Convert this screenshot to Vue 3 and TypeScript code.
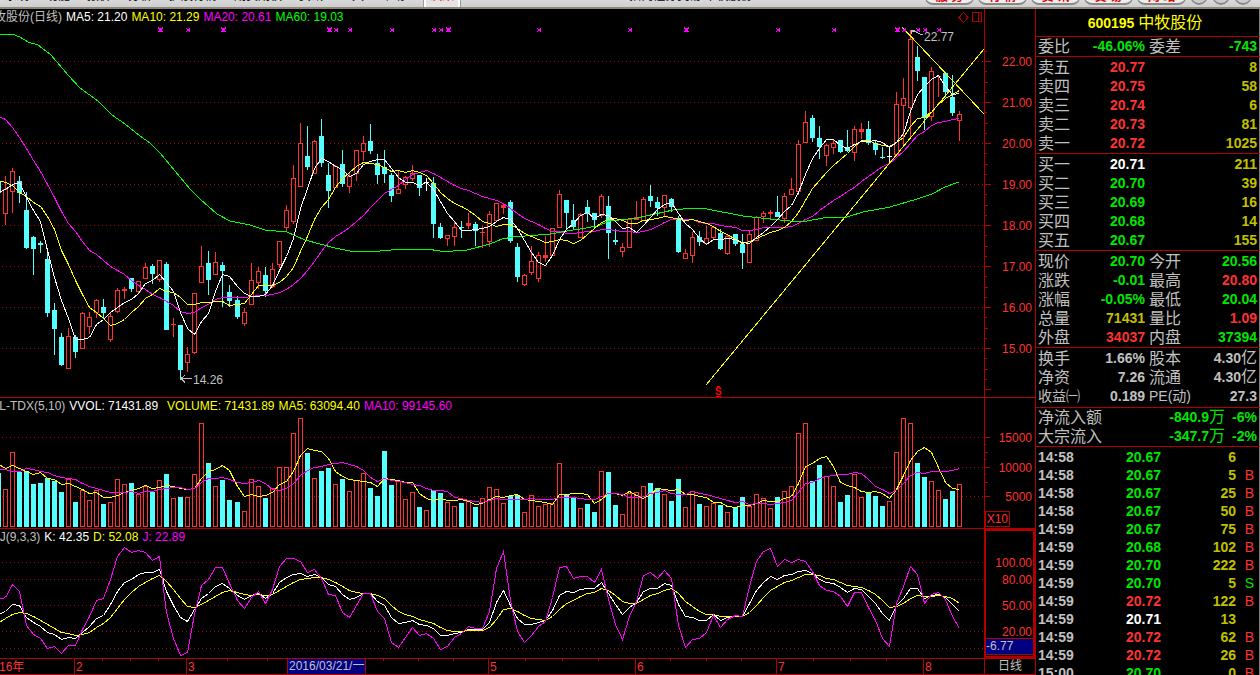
<script setup lang="ts">
type Candle = [kind: string, high: number, top: number, bottom: number, low: number, volume: number]
type Point = [number, number]

// Each session: direction (r up, c down, w unchanged), then high, body top, body bottom, low and volume top on the chart scale.
const source = `r 176 189 214 225 489|r 168 171 192 213 452|c 176 181 193 203 472|c 192 210 248 249 471|c 236 237 249 275 484
c 241 243 245 253 483|c 250 259 313 317 478|c 303 310 329 355 481|c 333 337 365 366 492|r 328 336 369 369 479
c 335 337 352 358 502|r 312 313 349 349 490|r 312 317 327 334 500|r 299 300 313 318 490|c 299 307 313 319 504
r 313 316 340 342 502|r 288 290 312 313 479|r 287 289 291 299 484|c 278 278 289 292 483|r 281 281 292 293 494
r 263 267 279 279 486|c 264 266 274 284 492|r 260 260 280 282 480|c 262 264 330 330 474|r 318 324 325 337 498
c 325 325 370 380 497|r 347 354 363 372 497|r 293 293 353 354 474|r 246 266 283 283 423|c 251 263 280 295 463
r 252 262 275 275 486|c 262 265 271 307 480|c 285 292 301 307 500|c 296 300 317 319 502|r 308 312 324 326 511
r 263 280 305 305 479|r 267 271 283 289 486|c 267 275 291 297 498|r 263 269 287 288 488|r 241 241 265 268 467
r 205 210 228 232 467|r 165 178 222 224 433|r 123 143 187 187 418|c 126 156 167 170 453|r 140 141 174 174 478
c 119 136 163 167 471|c 163 175 191 208 468|r 165 166 188 188 484|c 150 164 184 187 479|r 173 176 187 193 491
r 150 150 174 181 480|r 136 143 152 161 473|c 124 141 151 154 488|c 154 163 175 184 496|c 150 167 174 183 451
c 173 175 196 202 485|r 171 189 194 194 481|r 176 177 185 189 499|r 165 173 179 181 492|c 175 175 188 196 507
w 178 182 183 191 510|c 177 183 224 238 490|c 223 227 238 239 493|r 235 235 239 246 502|r 222 227 237 246 506
c 221 227 228 238 503|r 213 223 226 229 501|c 222 224 231 246 507|r 226 232 233 248 498|r 211 214 242 247 487
r 203 203 221 221 489|r 204 205 208 214 503|c 200 202 241 243 496|c 243 247 277 282 495|r 274 275 285 286 512
r 246 261 273 275 495|r 252 255 279 282 506|r 236 255 258 262 504|r 228 228 256 256 503|r 190 194 228 228 463
c 200 200 213 230 495|c 204 220 227 230 498|r 213 214 238 238 508|c 200 207 214 222 504|c 213 213 220 228 512
r 194 196 216 218 471|c 196 206 233 259 472|c 229 240 242 245 505|r 243 247 252 257 514|r 219 219 248 248 493
r 201 217 220 220 492|r 197 199 221 221 486|c 185 196 201 207 483|c 197 202 208 216 488|r 195 195 208 216 494
c 198 199 207 212 501|c 216 218 252 253 479|r 249 253 259 259 507|r 232 237 256 263 491|c 231 237 242 246 504
r 226 238 244 244 506|r 227 227 238 239 503|c 229 233 249 250 505|r 235 236 254 255 512|c 234 234 244 246 507
c 234 244 253 269 497|r 230 234 263 263 506|r 216 217 241 241 494|r 211 213 217 223 498|r 210 212 214 219 508
c 196 212 217 217 497|r 193 196 219 223 491|r 178 189 195 195 486|r 140 144 192 195 433|r 111 122 143 143 423
c 115 118 138 142 481|c 126 138 147 159 465|r 144 145 156 166 476|r 140 143 148 154 486|c 140 140 152 153 502
c 130 147 151 152 495|r 126 129 153 161 474|r 123 129 132 139 497|c 121 129 143 145 492|c 141 143 150 155 496
c 147 157 158 159 506|w 146 156 157 163 501|r 92 104 155 155 452|r 78 98 106 145 418|r 30 39 108 137 423
c 46 57 71 81 463|c 77 77 118 130 477|r 67 71 117 121 481|r 75 76 77 97 490|c 73 73 92 97 499
c 75 97 113 116 491|r 111 114 121 141 484`

const candles: Candle[] = source.split(/[|\n]/).map((row) => {
  const [kind, ...values] = row.trim().split(' ')
  return [kind, ...values.map(Number)] as Candle
})

const xAt = (i: number): number => 5 + 7 * i + (i > 32 ? 1 : 0) + (i > 103 ? 1 : 0)
const closes = candles.map((c) => (c[0] === 'c' ? c[3] : c[2]))
const volumes = candles.map((c) => c[5])

const toLine = (points: Point[]): string => points.map(([x, y]) => `${x},${y}`).join(' ')

// Values before a full window is available come from the lead-in list.
function average(values: number[], span: number, lead: number[]): string {
  const points: Point[] = [[0, lead[0]]]
  values.forEach((_, i) => {
    const y = i < span - 1 ? lead[i + 1] : values.slice(i - span + 1, i + 1).reduce((a, b) => a + b, 0) / span
    points.push([xAt(i) + 0.5, Math.round(y) + 0.5])
  })
  return toLine(points)
}

const priceLines = [
  { name: 'magenta', points: average(closes, 20, [117, 119, 127, 137, 148, 160, 171, 184, 197, 211, 223, 231, 241, 250, 254, 260, 266, 270, 274, 280]) },
  { name: 'green', points: '0,34 12,34 20,37 28,42 38,45 50,54 57,62 68,75 80,88 98,101 112,115 125,124 140,136 150,143 160,153 170,165 180,177 190,189 200,199 217,214 230,221 250,225 265,230 287,232 305,240 320,244 335,248 350,251 380,251 403,249 427,249 440,251 453,251 467,250 490,244 502,239 513,237 550,234 567,231 580,229 597,226 610,221 637,218 655,214 673,210 693,208 707,209 743,216 770,219 790,221 807,221 823,218 847,217 863,212 890,207 917,199 932,194 945,187 959,182' },
  { name: 'yellow', points: average(closes, 10, [181, 182, 185, 192, 196, 202, 206, 216, 229, 250]) },
  { name: 'white', points: average(closes, 5, [192, 189, 184, 182, 197]) },
]
const volumeLines = [
  { name: 'yellow', points: average(volumes, 5, [465, 468, 465, 468, 471]) },
  { name: 'magenta', points: average(volumes, 10, [469, 469, 471, 471, 468, 469, 471, 472, 475, 477]) },
]

function stochastic() {
  const leadK = [611, 604, 605, 617, 622, 626, 632, 634]
  const leadD = [618, 614, 612, 613, 616, 620, 624, 628]
  const k: Point[] = [[0, 614]]
  const d: Point[] = [[0, 622]]
  const j: Point[] = [[0, 599]]
  let ky = 0
  let dy = 0
  candles.forEach((_, i) => {
    if (i < 8) {
      ky = leadK[i]
      dy = leadD[i]
    } else {
      const span = candles.slice(i - 8, i + 1)
      const high = Math.min(...span.map((c) => c[1]))
      const low = Math.max(...span.map((c) => c[4]))
      const raw = 648.3 - (86.6 * (low - closes[i])) / (low - high)
      ky = (2 * ky + raw) / 3
      dy = (2 * dy + ky) / 3
    }
    const x = xAt(i) + 0.5
    k.push([x, Math.round(ky) + 0.5])
    d.push([x, Math.round(dy) + 0.5])
    j.push([x, Math.round(3 * ky - 2 * dy) + 0.5])
  })
  return [
    { name: 'white', points: toLine(k) },
    { name: 'yellow', points: toLine(d) },
    { name: 'magenta', points: toLine(j) },
  ]
}
const kdjLines = stochastic()

const box = (x: number, y: number, w: number, h: number): string => `M${x} ${y}h${w}v${h}h${-w}z`

const shapes = candles.map(([kind, high, top, bottom, low], i) => {
  const x = xAt(i)
  const hollow = kind === 'r' && bottom - top > 3
  let path = box(x - 2, top, 5, Math.max(1, bottom - top))
  if (hollow) path += box(x - 1, top + 1, 3, bottom - top - 2)
  if (top > high) path += box(x, high, 1, top - high)
  if (low > bottom) path += box(x, bottom, 1, low - bottom)
  return { kind, path }
})
const bars = candles.map(([kind, , , , , top], i) => {
  const x = xAt(i)
  return {
    kind: kind === 'c' ? 'c' : 'r',
    path: box(x - 2, top, 5, 527 - top) + (kind === 'c' ? '' : box(x - 1, top + 1, 3, 525 - top)),
  }
})

const priceGrid = [22, 21, 20, 19, 18, 17, 16, 15].map((p, i) => ({ label: p.toFixed(2), y: 61 + 41 * i }))
const volumeGrid = [{ label: '15000', y: 437 }, { label: '10000', y: 467 }, { label: '5000', y: 496 }]
const kdjGrid = [{ label: '100.00', y: 562 }, { label: '80.00', y: 579 }, { label: '50.00', y: 605 }, { label: '20.00', y: 631 }, { label: '', y: 648 }]
const priceTicks = Array.from({ length: 34 }, (_, i) => ({ y: Math.round(50.75 + 10.25 * i), w: (i + 3) % 4 === 0 ? 6 : (i + 1) % 4 === 0 ? 3 : 2 }))
const volumeTicks = [[437, 5], [444, 1], [452, 3], [459, 1], [467, 5], [474, 1], [482, 3], [489, 1], [496, 5]]

const markers: [number, boolean][] = [
  [160, true], [188, false], [223, true], [329, true], [336, false], [350, false], [392, false], [434, false], [441, false], [448, true],
  [539, false], [630, false], [686, true], [778, false], [834, false], [897, true], [904, false], [918, false], [925, false], [939, false],
]
const months: [string, number][] = [['2', 74], ['3', 186], ['5', 488], ['6', 635], ['7', 776], ['8', 923]]
const minorTicks = [102, 130, 158, 227, 267, 383, 418, 453, 525, 562, 598, 670, 706, 741, 813, 850, 886]

const menus = ['系统', '功能', '报价', '分析', '扩展行情', '期货期权', '资讯', '工具', '帮助']
const actions = ['服 务', '行 情', '资 讯', '交 易', '网 站']

const sells = [['卖五', '20.77', '8'], ['卖四', '20.75', '58'], ['卖三', '20.74', '6'], ['卖二', '20.73', '81'], ['卖一', '20.72', '1025']]
const buys = [['买一', '20.71', '211'], ['买二', '20.70', '39'], ['买三', '20.69', '16'], ['买四', '20.68', '14'], ['买五', '20.67', '155']]
const quotes = [
  ['现价', '20.70', 'up', '今开', '20.56', 'up'],
  ['涨跌', '-0.01', 'up', '最高', '20.80', 'hot'],
  ['涨幅', '-0.05%', 'up', '最低', '20.04', 'up'],
  ['总量', '71431', 'amount', '量比', '1.09', 'hot'],
  ['外盘', '34037', 'hot', '内盘', '37394', 'up'],
]
const facts = [['换手', '1.66%', '股本', '4.30', '亿'], ['净资', '7.26', '流通', '4.30', '亿'], ['收益㈠', '0.189', 'PE(动)', '27.3', '']]
const flows = [['净流入额', '-840.9', '-6%'], ['大宗流入', '-347.7', '-2%']]
const trades = [
  ['14:58', '20.67', '6', ''], ['14:58', '20.67', '5', 'B'], ['14:58', '20.67', '25', 'B'], ['14:58', '20.67', '50', 'B'],
  ['14:59', '20.67', '75', 'B'], ['14:59', '20.68', '102', 'B'], ['14:59', '20.70', '222', 'B'], ['14:59', '20.70', '5', 'S'],
  ['14:59', '20.72', '122', 'B'], ['14:59', '20.71', '13', ''], ['14:59', '20.72', '62', 'B'], ['14:59', '20.72', '26', 'B'],
  ['15:00', '20.70', '0', 'B'],
]
const tone = (price: string): string => (Number(price) > 20.71 ? 'hot' : Number(price) < 20.71 ? 'up' : 'even')
</script>

<template>
  <div class="app">
    <header class="topbar">
      <nav class="menu"><button v-for="m in menus" :key="m" type="button">{{ m }}</button></nav>
      <button class="tab" type="button">决策</button>
      <span class="caption">招商证券交易 中牧股份</span>
      <div class="actions">
        <button v-for="a in actions" :key="a" type="button" class="pill">{{ a }}</button>
        <button type="button" class="round" aria-label="最小化"><svg viewBox="0 0 18 18"><path d="M5 12h8" /></svg></button>
        <button type="button" class="round" aria-label="还原"><svg viewBox="0 0 18 18"><path d="M6 7h7v6H6z" /></svg></button>
        <button type="button" class="round" aria-label="关闭"><svg viewBox="0 0 18 18"><path d="M5 5l8 8M13 5l-8 8" /></svg></button>
      </div>
    </header>

    <div class="body">
      <main class="charts">
        <section class="plot">
          <p class="legend stock"><span class="grey">牧股份(日线)</span><span class="white">MA5: 21.20</span><span class="yellow">MA10: 21.29</span><span class="magenta">MA20: 20.61</span><span class="green">MA60: 19.03</span></p>
          <svg viewBox="0 9 984 388">
            <line v-for="g in priceGrid" :key="g.y" class="grid" x1="2" x2="984" :y1="g.y + 0.5" :y2="g.y + 0.5" />
            <path class="c" d="M0 181h1v12h-1z" />
            <path v-for="(s, i) in shapes" :key="i" :class="s.kind" :d="s.path" fill-rule="evenodd" />
            <polyline v-for="l in priceLines" :key="l.name" :class="l.name" :points="l.points" />
            <polyline class="yellow" points="902,27 984,114" />
            <polyline class="yellow" points="706,385 984,49" />
            <g v-for="[x, big] in markers" :key="x" class="marker">
              <path :d="`M${x - 2} 28h1v1h-1zM${x + 2} 28h-1v1h1zM${x - 1} 29h3v2h-3zM${x - 2} 31h1v1h-1zM${x + 2} 31h-1v1h1z`" />
              <path v-if="big" :d="`M${x - 2} 27h1v2h-1zM${x + 2} 27h1v2h-1zM${x - 1} 28h3v4h-3zM${x + 2} 31h1v1h-1z`" />
            </g>
            <path class="arrow" d="M911.5 34v-4h3M912 31l4 1l4 2l3 0M192 378.500h-10M185 375l-4 3.500l4 4" />
            <text class="note" x="924" y="41">22.77</text>
            <text class="note" x="193" y="384">14.26</text>
            <path class="tool" d="M963.5 12.500l4.500 5l-4.500 5l-4.500-5zM972.500 12.500h9v9h-9zM978.500 12.500v9" />
            <text class="event" x="715" y="395">S</text>
            <path class="event" d="M717 386h3v1h-3zM716 396h5v1h-5z" />
          </svg>
        </section>
        <section class="scale">
          <svg viewBox="985 9 50 388">
            <rect v-for="t in priceTicks" :key="t.y" class="tick" x="985" :y="t.y" :width="t.w" height="1" />
            <text v-for="g in priceGrid" :key="g.y" x="1032" :y="g.y + 5">{{ g.label }}</text>
          </svg>
        </section>

        <section class="plot">
          <p class="legend volume"><span class="grey">VOL-TDX(5,10)</span><span class="white">VVOL: 71431.89</span><span class="yellow lead">VOLUME: 71431.89</span><span class="yellow">MA5: 63094.40</span><span class="magenta">MA10: 99145.60</span></p>
          <svg viewBox="0 398 984 130">
            <line v-for="g in volumeGrid" :key="g.y" class="grid" x1="2" x2="984" :y1="g.y + 0.5" :y2="g.y + 0.5" />
            <path class="c" d="M0 473h1v54h-1z" />
            <path v-for="(b, i) in bars" :key="i" :class="b.kind" :d="b.path" fill-rule="evenodd" />
            <polyline v-for="l in volumeLines" :key="l.name" :class="l.name" :points="l.points" />
          </svg>
        </section>
        <section class="scale">
          <svg viewBox="985 398 50 130">
            <rect v-for="t in volumeTicks" :key="t[0]" class="tick" x="985" :y="t[0]" :width="t[1]" height="1" />
            <text v-for="g in volumeGrid" :key="g.y" x="1032" :y="g.y + 5">{{ g.label }}</text>
            <rect class="unit" x="985.500" y="511.500" width="24" height="15" />
            <text x="1008" y="523">X10</text>
          </svg>
        </section>

        <section class="plot">
          <p class="legend kdj"><span class="grey">KDJ(9,3,3)</span><span class="white">K: 42.35</span><span class="yellow">D: 52.08</span><span class="magenta">J: 22.89</span></p>
          <svg viewBox="0 529 984 129">
            <line v-for="g in kdjGrid" :key="g.y" class="grid" x1="2" x2="984" :y1="g.y + 0.5" :y2="g.y + 0.5" />
            <polyline v-for="l in kdjLines" :key="l.name" :class="l.name" :points="l.points" />
          </svg>
        </section>
        <section class="scale">
          <svg viewBox="985 529 50 129">
            <path class="frame" d="M985 530H1034V657H985z" />
            <rect class="cursor" x="986" y="638" width="47" height="17" />
            <path class="tick" d="M986 638h47v1h-47zM986 654h47v1h-47z" />
            <text v-for="g in kdjGrid" :key="g.y" x="1032" :y="g.y + 5">{{ g.label }}</text>
            <text class="note start" x="986" y="650">-6.77</text>
          </svg>
        </section>

        <section class="timeline">
          <svg viewBox="0 659 984 15">
            <text x="-1" y="671">16年</text>
            <g v-for="[name, x] in months" :key="name">
              <rect class="tick" :x="x" y="659" width="1" height="15" />
              <text :x="x + 2" y="671">{{ name }}</text>
            </g>
            <rect v-for="x in minorTicks" :key="x" class="tick" :x="x" y="659" width="1" height="2" />
            <rect class="cursor" x="287" y="659" width="79" height="15" />
            <path class="tick" d="M287 659h1v15h-1zM365 659h1v15h-1z" />
            <text class="note" x="289" y="670">2016/03/21/一</text>
          </svg>
        </section>
        <section class="period">日线</section>
      </main>

      <aside class="side">
        <h1>600195 <span>中牧股份</span></h1>
        <table class="pairs ratio"><tbody><tr><th>委比</th><td class="up">-46.06%</td><th>委差</th><td class="up">-743</td></tr></tbody></table>
        <table class="book"><tbody>
          <tr v-for="r in sells" :key="r[0]"><th>{{ r[0] }}</th><td class="hot">{{ r[1] }}</td><td class="amount">{{ r[2] }}</td></tr>
        </tbody></table>
        <table class="book"><tbody>
          <tr v-for="r in buys" :key="r[0]"><th>{{ r[0] }}</th><td :class="tone(r[1])">{{ r[1] }}</td><td class="amount">{{ r[2] }}</td></tr>
        </tbody></table>
        <table class="pairs"><tbody>
          <tr v-for="r in quotes" :key="r[0]"><th>{{ r[0] }}</th><td :class="r[2]">{{ r[1] }}</td><th>{{ r[3] }}</th><td :class="r[5]">{{ r[4] }}</td></tr>
        </tbody></table>
        <table class="pairs facts"><tbody>
          <tr v-for="r in facts" :key="r[0]"><th>{{ r[0] }}</th><td>{{ r[1] }}</td><th>{{ r[2] }}</th><td>{{ r[3] }}<span>{{ r[4] }}</span></td></tr>
        </tbody></table>
        <table class="flow"><tbody>
          <tr v-for="r in flows" :key="r[0]"><th>{{ r[0] }}</th><td class="up">{{ r[1] }}<span>万</span></td><td class="up">{{ r[2] }}</td></tr>
        </tbody></table>
        <table class="trades"><tbody>
          <tr v-for="(r, i) in trades" :key="i"><td>{{ r[0] }}</td><td :class="tone(r[1])">{{ r[1] }}</td><td class="amount">{{ r[2] }}</td><td :class="r[3] === 'S' ? 'up' : 'hot'">{{ r[3] }}</td></tr>
        </tbody></table>
      </aside>
    </div>
  </div>
</template>

<style>
body { margin: 0; background: #000; }
</style>

<style scoped>
.app {
  height: 100vh;
  display: flex;
  flex-direction: column;
  overflow: hidden;
  background: #000;
  color: #c0c0c0;
  font: 12px/16px "Liberation Sans", "Noto Sans CJK SC", sans-serif;
}
button { margin: 0; padding: 0; border: 0; background: none; font: inherit; color: inherit; white-space: nowrap; }
.topbar {
  flex: none;
  position: relative;
  display: flex;
  align-items: flex-end;
  height: 7px;
  padding-left: 5px;
  border-bottom: 2px solid #8c867c;
  background: linear-gradient(#dadada, #cecece);
  color: #000;
  overflow: hidden;
}
.menu { display: flex; gap: 17px; }
.menu button, .tab, .caption { line-height: 16px; padding-bottom: 3px; }
.tab { width: 36px; margin-left: 19px; border: solid #fff; border-width: 0 2px; outline: 1px solid #999; background: #e4e4e4; color: #f00; }
.caption { margin-left: 169px; }
.actions { display: flex; gap: 4px; margin-left: auto; padding: 0 8px 2px 0; }
.pill, .round { box-sizing: border-box; height: 20px; border: 1px solid #888; border-bottom-width: 2px; border-radius: 8px; background: #eee; }
.pill { width: 49px; padding-top: 5px; color: #e00000; font-weight: bold; line-height: 12px; }
.round { width: 18px; border-radius: 50%; background: #ccc; }
.round svg { display: block; width: 100%; }
.round path { fill: none; stroke: #777; stroke-width: 2; }

.body { flex: 1; min-height: 0; display: flex; }
.charts {
  flex: 1;
  min-width: 0;
  display: grid;
  grid-template-columns: minmax(0, 1fr) 50px;
  grid-template-rows: minmax(0, 389fr) minmax(0, 131fr) minmax(0, 130fr) 16px;
}
.charts > section { border-bottom: 1px solid #b00000; overflow: hidden; }
.plot, .timeline { border-right: 1px solid #b00000; position: relative; }
svg { display: block; width: 100%; height: 100%; shape-rendering: crispEdges; }
.legend { position: absolute; z-index: 1; top: 0; left: 0; margin: 0; display: flex; gap: 4px; white-space: nowrap; }
.stock { left: -6px; }
.volume { left: -18px; }
.kdj { left: -17px; }
.lead { margin-left: 5px; }
.grid { stroke: #b00000; stroke-dasharray: 1 3; }
.r { fill: #ff3232; }
.c { fill: #54ffff; }
.w { fill: #fff; }
polyline { fill: none; stroke: currentColor; stroke-width: 1; }
.white { color: #fff; }
.yellow { color: #ff0; }
.magenta { color: #f0f; }
.green { color: #0f0; }
.grey { color: #c0c0c0; }
.marker { fill: #f0f; }
.arrow { fill: none; stroke: #c0c0c0; }
.tool { fill: none; stroke: #b00000; }
text { fill: #ff3232; font-size: 12px; }
.scale text { text-anchor: end; }
text.note { fill: #c0c0c0; }
.scale text.start { text-anchor: start; }
.event { fill: #f00; font-size: 10px; font-weight: bold; }
.tick { fill: #b00000; }
.unit { fill: none; stroke: #b00000; }
.frame { fill: none; stroke: #b00000; stroke-width: 2; }
.cursor { fill: #000080; }
.period { text-align: center; line-height: 14px; }

.side { flex: none; box-sizing: border-box; width: 225px; border: solid #b00000; border-width: 0 0 0 1px; box-shadow: inset -1px 0 #808080; overflow: hidden; }
h1 { margin: 0; height: 27px; border-bottom: 1px solid #b00000; color: #ff0; font-size: 14px; line-height: 27px; text-align: center; padding-right: 6px; }
h1 span, td span { font-size: 16px; font-weight: normal; }
table { width: 100%; table-layout: fixed; border-collapse: separate; border-spacing: 0; border-bottom: 1px solid #b00000; padding-top: 1px; }
.ratio, .flow { padding-top: 0; }
.facts { padding-bottom: 1px; }
tr { height: 19px; }
th, td { padding: 0; height: 19px; line-height: 19px; white-space: nowrap; }
th { padding-left: 2px; text-align: left; font-size: 16px; font-weight: normal; }
td { text-align: right; font-size: 14px; font-weight: bold; }
td span { line-height: 16px; }
th:first-child { width: 38px; }
.pairs td:nth-child(2), .book td:nth-child(2) { width: 69px; }
.pairs th:nth-child(3) { width: 42px; padding-left: 4px; }
.pairs td:last-child, .book td:last-child, .flow td:last-child { padding-right: 3px; }
.facts tr:last-child th { font-size: 14px; }
.flow th:first-child { width: 68px; }
.flow td:last-child { width: 32px; }
.trades { border-bottom: 0; }
.trades tr, .trades td { height: 18px; line-height: 18px; }
.trades td:first-child { width: 40px; padding-left: 2px; text-align: left; }
.trades td:nth-child(2) { width: 83px; }
.trades td:nth-child(4) { width: 18px; padding-right: 6px; font-weight: normal; }
.up { color: #00e600; }
.hot { color: #ff3232; }
.even { color: #fff; }
.amount { color: #c0c000; }
</style>
